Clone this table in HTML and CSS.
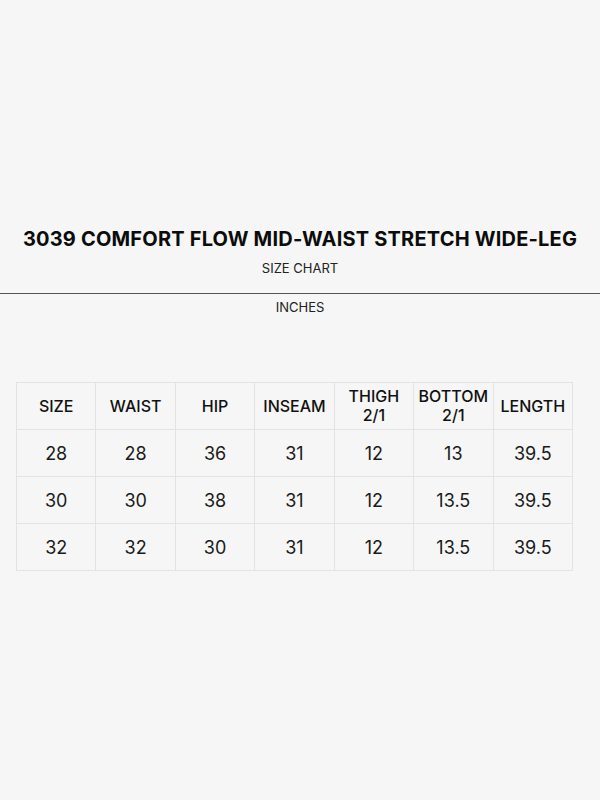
FILE: index.html
```html
<!DOCTYPE html>
<html>
<head>
<meta charset="utf-8">
<link rel="stylesheet" href="styles.css">
</head>
<body>
<div class="page">
  <h1 class="title">3039 COMFORT FLOW MID-WAIST STRETCH WIDE-LEG</h1>
  <div class="subtitle">SIZE CHART</div>
  <hr class="rule">
  <div class="units">INCHES</div>
  <table class="chart">
    <thead>
      <tr><th>SIZE</th><th>WAIST</th><th>HIP</th><th>INSEAM</th><th><span class="hl">THIGH</span><span class="hl">2/1</span></th><th><span class="hl">BOTTOM</span><span class="hl">2/1</span></th><th>LENGTH</th></tr>
    </thead>
    <tbody>
      <tr><td>28</td><td>28</td><td>36</td><td>31</td><td>12</td><td>13</td><td>39.5</td></tr>
      <tr><td>30</td><td>30</td><td>38</td><td>31</td><td>12</td><td>13.5</td><td>39.5</td></tr>
      <tr><td>32</td><td>32</td><td>30</td><td>31</td><td>12</td><td>13.5</td><td>39.5</td></tr>
    </tbody>
  </table>
</div>
</body>
</html>
```
FILE: styles.css
```css
html, body {
  margin: 0;
  padding: 0;
  background: #f5f6f5;
}
body {
  font-family: Inter, "Liberation Sans", sans-serif;
  color: #111;
}
.page {
  width: 600px;
  height: 800px;
  padding-top: 227px;
  box-sizing: border-box;
}
.title {
  margin: 0;
  text-align: center;
  font-size: 20px;
  font-weight: 700;
  line-height: 24px;
  letter-spacing: 0.2px;
  color: #0c0c0c;
}
.subtitle {
  margin-top: 9px;
  text-align: center;
  font-size: 13px;
  line-height: 16px;
  color: #222;
}
.rule {
  margin: 17px 0 0 0;
  border: 0;
  height: 1px;
  background: #555;
}
.units {
  margin-top: 5px;
  text-align: center;
  font-size: 13px;
  line-height: 16px;
  color: #222;
}
.chart {
  margin: 67px 0 0 16px;
  width: 557px;
  border-collapse: collapse;
  table-layout: fixed;
}
.chart th, .chart td {
  border: 1px solid #e2e3e2;
  text-align: center;
  padding: 0;
  height: 46px;
}
.chart th {
  font-size: 16px;
  font-weight: 500;
  line-height: 18px;
  color: #111;
}
.hl {
  display: block;
  line-height: 19px;
}
.chart td {
  font-size: 18px;
  font-weight: 400;
  color: #1a1a1a;
}
```
